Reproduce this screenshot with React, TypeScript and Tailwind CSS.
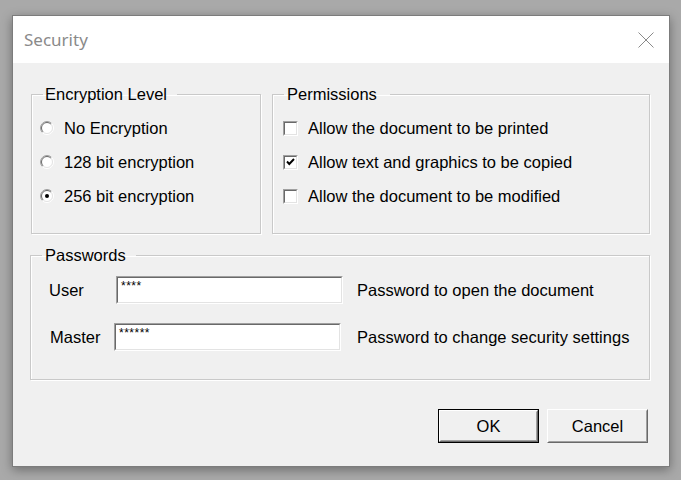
import React from "react";

const font = { fontFamily: '"Liberation Sans", Arial, sans-serif' };

function Radio({ checked }: { checked?: boolean }) {
  return (
    <svg width="14" height="14" viewBox="0 0 14 14" className="shrink-0">
      <circle cx="7" cy="7" r="6" fill="#fff" />
      <path d="M2.4 11.6 A6.5 6.5 0 0 1 11.6 2.4" stroke="#a0a0a0" strokeWidth="1" fill="none" />
      <path d="M3.1 10.9 A5.5 5.5 0 0 1 10.9 3.1" stroke="#696969" strokeWidth="1" fill="none" />
      <path d="M11.6 2.4 A6.5 6.5 0 0 1 2.4 11.6" stroke="#ffffff" strokeWidth="1" fill="none" />
      <path d="M10.9 3.1 A5.5 5.5 0 0 1 3.1 10.9" stroke="#e3e3e3" strokeWidth="1" fill="none" />
      {checked && <circle cx="7" cy="7" r="2" fill="#000" />}
    </svg>
  );
}

function Check({ checked }: { checked?: boolean }) {
  return (
    <span className="inline-block w-[15px] h-[15px] border border-t-[#a0a0a0] border-l-[#a0a0a0] border-b-white border-r-white shrink-0">
      <span className="flex items-center justify-center w-full h-full border border-t-[#696969] border-l-[#696969] border-b-[#e3e3e3] border-r-[#e3e3e3] bg-white">
        {checked && (
          <svg width="9" height="8" viewBox="0 0 9 8">
            <path d="M1 3.5 L3.3 6 L8 1" stroke="#000" strokeWidth="1.9" fill="none" />
          </svg>
        )}
      </span>
    </span>
  );
}

function Field({ value }: { value: string }) {
  return (
    <div className="w-[227px] h-[28px] border border-t-[#a0a0a0] border-l-[#a0a0a0] border-b-white border-r-white">
      <div className="w-full h-full border border-t-[#696969] border-l-[#696969] border-b-[#e3e3e3] border-r-[#e3e3e3] bg-white pl-[3px] pt-[1px] text-[12px] leading-[14px] tracking-[0.5px]">
        {value}
      </div>
    </div>
  );
}

function Button({ label, primary }: { label: string; primary?: boolean }) {
  const inner = (
    <div className="w-full h-full border border-t-white border-l-white border-b-[#696969] border-r-[#696969]">
      <div className="w-full h-full border border-t-[#f0f0f0] border-l-[#f0f0f0] border-b-[#a0a0a0] border-r-[#a0a0a0] flex items-center justify-center bg-[#f0f0f0]">
        {label}
      </div>
    </div>
  );
  return primary ? (
    <div className="w-[101px] h-[34px] border border-black">{inner}</div>
  ) : (
    <div className="w-[101px] h-[34px]">{inner}</div>
  );
}

export default function App() {
  return (
    <div className="w-[681px] h-[480px] bg-[#a9a9a9] pt-[15px] pl-[12px] overflow-hidden" style={font}>
      <div className="w-[658px] h-[452px] border border-[#7c7c7c] bg-[#f0f0f0] shadow-[0_3px_10px_rgba(0,0,0,0.35)] flex flex-col text-[16.5px] text-black">
        <div className="h-[47px] bg-white flex items-center justify-between pl-[11px] pr-[15px]">
          <span className="text-[17px] text-[#8a8a8a]" style={{ fontFamily: '"Noto Sans", "Open Sans", sans-serif' }}>
            Security
          </span>
          <svg width="16" height="16" viewBox="0 0 16 16">
            <path d="M0.5 0.5 L15.5 15.5 M15.5 0.5 L0.5 15.5" stroke="#8a8a8a" strokeWidth="1" />
          </svg>
        </div>
        <div className="flex-1 flex flex-col pl-[18px] pr-[18px] pt-[22px]">
          <div className="flex gap-[11px]">
            <fieldset className="w-[230px] h-[149px] border border-[#c9c9c9] shadow-[inset_1px_1px_0_white,1px_1px_0_white]">
              <legend className="ml-[11px] pl-[2px] pr-[10px] leading-[18px]">Encryption Level</legend>
              <div className="pt-[8px] pl-[8px] flex flex-col">
                <label className="h-[34px] flex items-center gap-[10px]">
                  <Radio />
                  <span>No Encryption</span>
                </label>
                <label className="h-[34px] flex items-center gap-[10px]">
                  <Radio />
                  <span>128 bit encryption</span>
                </label>
                <label className="h-[34px] flex items-center gap-[10px]">
                  <Radio checked />
                  <span>256 bit encryption</span>
                </label>
              </div>
            </fieldset>
            <fieldset className="w-[378px] h-[149px] border border-[#c9c9c9] shadow-[inset_1px_1px_0_white,1px_1px_0_white]">
              <legend className="ml-[11px] pl-[3px] pr-[13px] leading-[18px]">Permissions</legend>
              <div className="pt-[8px] pl-[10px] flex flex-col">
                <label className="h-[34px] flex items-center gap-[10px]">
                  <Check />
                  <span>Allow the document to be printed</span>
                </label>
                <label className="h-[34px] flex items-center gap-[10px]">
                  <Check checked />
                  <span>Allow text and graphics to be copied</span>
                </label>
                <label className="h-[34px] flex items-center gap-[10px]">
                  <Check />
                  <span>Allow the document to be modified</span>
                </label>
              </div>
            </fieldset>
          </div>
          <fieldset className="mt-[12px] -ml-px w-[620px] h-[134px] border border-[#c9c9c9] shadow-[inset_1px_1px_0_white,1px_1px_0_white]">
            <legend className="ml-[11px] pl-[3px] pr-[10px] leading-[18px]">Passwords</legend>
            <div className="pt-[12px] pl-[18px] flex flex-col gap-[19px]">
              <div className="flex items-center">
                <span className="w-[67px]">User</span>
                <Field value="****" />
                <span className="ml-[14px]">Password to open the document</span>
              </div>
              <div className="flex items-center">
                <span className="w-[65px] pl-[1px]">Master</span>
                <Field value="******" />
                <span className="ml-[16px]">Password to change security settings</span>
              </div>
            </div>
          </fieldset>
          <div className="flex justify-end gap-[8px] mt-[29px] pr-[3px]">
            <Button label="OK" primary />
            <Button label="Cancel" />
          </div>
        </div>
      </div>
    </div>
  );
}
